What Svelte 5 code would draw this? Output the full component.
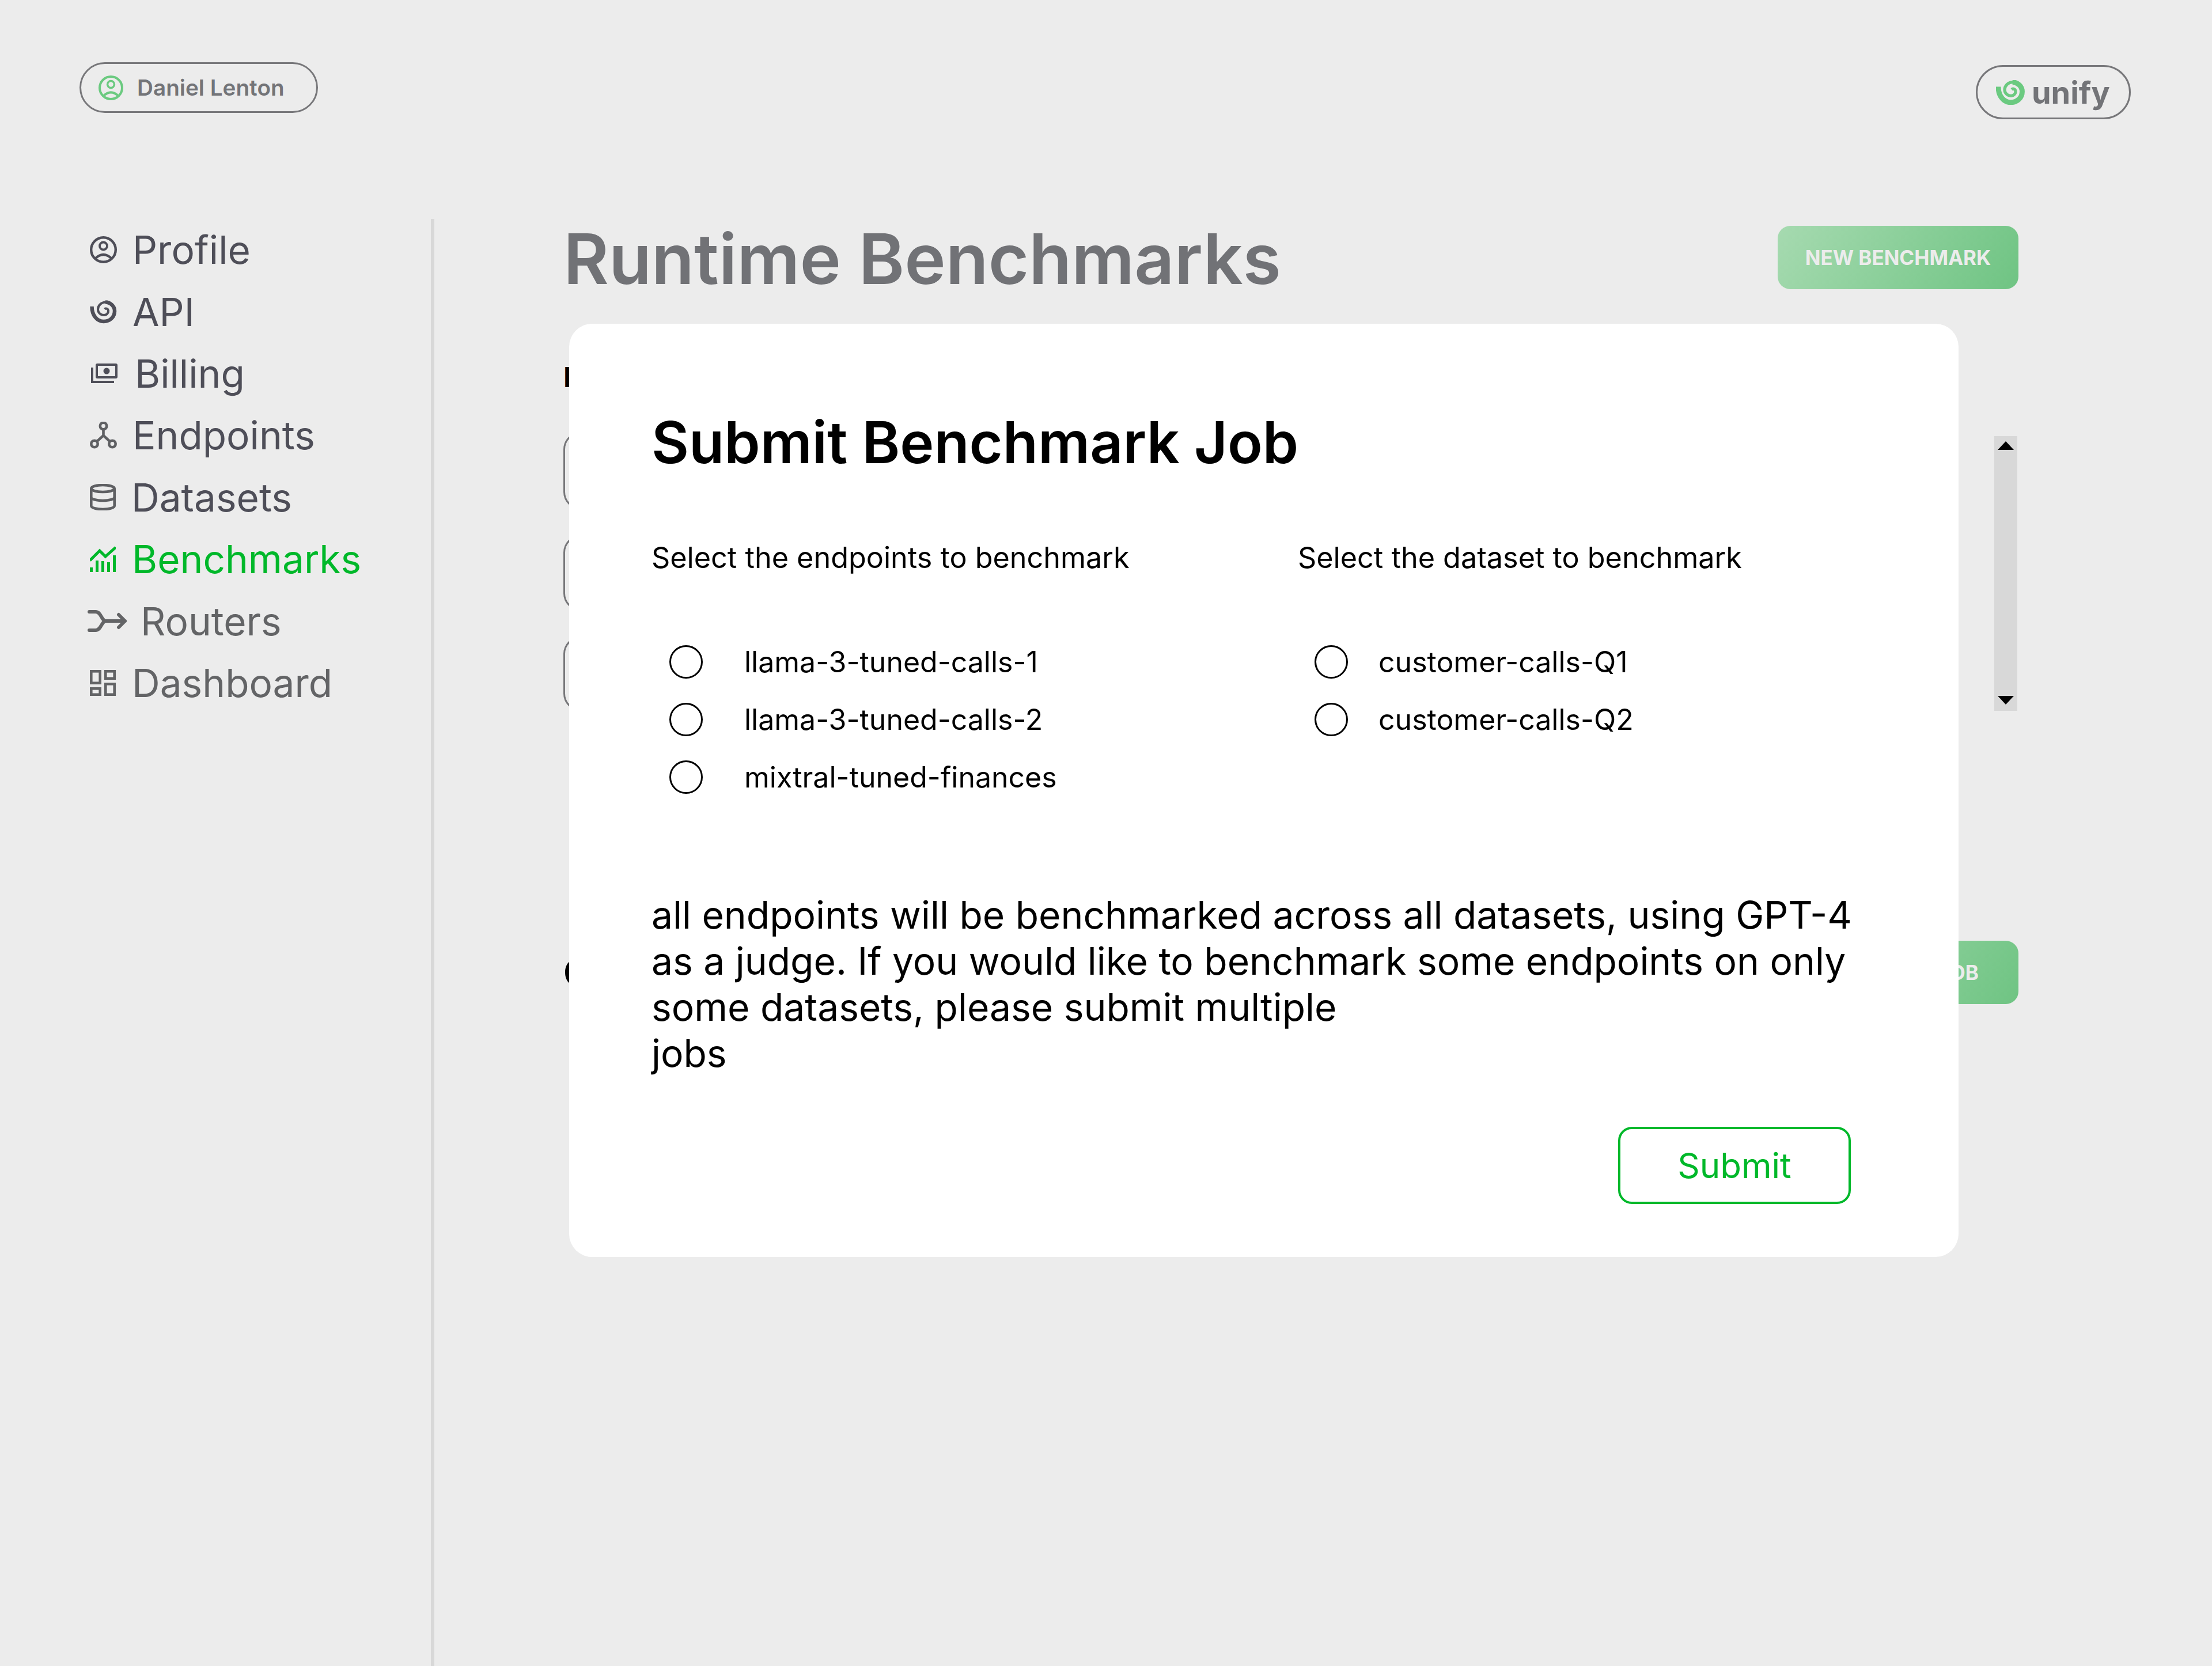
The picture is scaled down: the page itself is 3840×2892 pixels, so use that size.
<script>
  const nav = [
    { label: 'Profile', icon: 'profile' },
    { label: 'API', icon: 'api' },
    { label: 'Billing', icon: 'billing' },
    { label: 'Endpoints', icon: 'endpoints' },
    { label: 'Datasets', icon: 'datasets' },
    { label: 'Benchmarks', icon: 'benchmarks', active: true },
    { label: 'Routers', icon: 'routers', soft: true },
    { label: 'Dashboard', icon: 'dashboard', soft: true }
  ];
  const endpoints = ['llama-3-tuned-calls-1', 'llama-3-tuned-calls-2', 'mixtral-tuned-finances'];
  const datasets = ['customer-calls-Q1', 'customer-calls-Q2'];
</script>

{#snippet spiral(w, h, outer, inner)}
  <svg width={w} height={h} viewBox="0 0 47 41" fill="none" stroke="currentColor">
    <path stroke-width={outer} d="M3.5 11 C3.5 27 13 37 24 37 C35 37 43 29 43 19 C43 10 35 3.5 27 3.5" />
    <path stroke-width={inner} d="M28 3.5 C19 3.5 14 10 14 16 C14 22 19 26 24.5 26 C29.5 26 32.5 22 32 18 C31.5 15 28 13.5 25.5 15.5" />
  </svg>
{/snippet}

{#snippet profile(size)}
  <svg width={size} height={size} viewBox="0 0 47 47" fill="none" stroke="currentColor" stroke-width="4.4">
    <circle cx="23.5" cy="23.5" r="21.3" />
    <circle cx="23.5" cy="17" r="6.5" stroke-width="3.8" />
    <path d="M9 39 Q23.5 25 38 39" />
  </svg>
{/snippet}

{#snippet icon(name)}
  {#if name === 'profile'}
    {@render profile(47)}
  {:else if name === 'api'}
    {@render spiral(47, 41, 6.5, 4)}
  {:else if name === 'billing'}
    <svg width="46" height="34" viewBox="0 0 46 34" fill="none" stroke="currentColor" stroke-width="4">
      <rect x="10" y="2" width="34" height="22" rx="1" />
      <circle cx="27" cy="13" r="5.5" fill="currentColor" stroke="none" />
      <path d="M2 7 V32 H40" />
    </svg>
  {:else if name === 'endpoints'}
    <svg width="47" height="47" viewBox="0 0 47 47" fill="none" stroke="#5f6063" stroke-width="4.6">
      <circle cx="23.5" cy="7.5" r="5.7" />
      <circle cx="8" cy="38.5" r="5.7" />
      <circle cx="39" cy="38.5" r="5.7" />
      <path d="M23.5 13 V24 L12 34.5 M23.5 24 L35 34.5" />
    </svg>
  {:else if name === 'datasets'}
    <svg width="45" height="46" viewBox="0 0 45 46" fill="none" stroke="#5f6063" stroke-width="4.6">
      <ellipse cx="22.5" cy="8" rx="20.2" ry="6" />
      <path d="M2.3 8 V38 C2.3 41.5 11 44 22.5 44 C34 44 42.7 41.5 42.7 38 V8 M2.3 23 C2.3 26.5 11 29 22.5 29 C34 29 42.7 26.5 42.7 23" />
    </svg>
  {:else if name === 'benchmarks'}
    <svg width="45" height="45" viewBox="0 0 45 45" fill="currentColor">
      <path d="M0 25 L17 8 L27 18 L45 2" fill="none" stroke="currentColor" stroke-width="5" />
      <rect x="0" y="37" width="5" height="8" />
      <rect x="10" y="25" width="5" height="20" />
      <rect x="20" y="26" width="5" height="19" />
      <rect x="30" y="28" width="5" height="17" />
      <rect x="40" y="16" width="5" height="29" />
    </svg>
  {:else if name === 'routers'}
    <svg width="68" height="40" viewBox="0 0 68 40" fill="none" stroke="currentColor" stroke-width="6" stroke-linecap="round" stroke-linejoin="round">
      <path d="M3 4 H14 C24 4 24 20 32 20 H65 M3 36 H14 C24 36 24 20 32 20 M54 9 L65 20 L54 31" />
    </svg>
  {:else}
    <svg width="45" height="45" viewBox="0 0 45 45" fill="none" stroke="currentColor" stroke-width="4.6">
      <rect x="2.3" y="2.3" width="15.4" height="20.4" />
      <rect x="27.3" y="2.3" width="15.4" height="12.4" />
      <rect x="2.3" y="32.3" width="15.4" height="10.4" />
      <rect x="27.3" y="24.3" width="15.4" height="18.4" />
    </svg>
  {/if}
{/snippet}

<div class="page">
  <header class="top">
    <div class="pill user">
      <span class="user-icon">{@render profile(43)}</span>
      <span>Daniel Lenton</span>
    </div>
    <div class="pill brand">
      <span class="brand-icon">{@render spiral(50, 43, 8.5, 5)}</span>
      <span>unify</span>
    </div>
  </header>

  <div class="body">
    <nav class="side">
      {#each nav as item}
        <a class="item {item.icon}" class:active={item.active} class:soft={item.soft} href="#top">
          {@render icon(item.icon)}
          <span>{item.label}</span>
        </a>
      {/each}
    </nav>

    <main class="main">
      <div class="head">
        <h1>Runtime Benchmarks</h1>
        <button class="cta">NEW BENCHMARK</button>
      </div>
      <div class="label">Inputs</div>
      <div class="list">
        <div class="fields">
          <div class="field one"></div>
          <div class="field two"></div>
          <div class="field three"></div>
        </div>
        <div class="scroll"><i class="up"></i><i class="down"></i></div>
      </div>
      <div class="foot">
        <span class="foot-label">Cost</span>
        <button class="cta job">SUBMIT JOB</button>
      </div>
    </main>
  </div>

  <section class="modal">
    <h2>Submit Benchmark Job</h2>
    <div class="cols">
      <div class="col">
        <p class="col-title">Select the endpoints to benchmark</p>
        {#each endpoints as e}
          <label class="radio"><i class="dot"></i><span>{e}</span></label>
        {/each}
      </div>
      <div class="col second">
        <p class="col-title">Select the dataset to benchmark</p>
        {#each datasets as d}
          <label class="radio"><i class="dot"></i><span>{d}</span></label>
        {/each}
      </div>
    </div>
    <p class="note">all endpoints will be benchmarked across all datasets, using GPT-4 as a judge. If you would like to benchmark some endpoints on only some datasets, please submit multiple<br />jobs</p>
    <div class="actions"><button class="submit">Submit</button></div>
  </section>
</div>

<style>
  :global(body) { margin: 0; background: #ececec; }
  .page {
    position: relative;
    width: 3840px;
    height: 2892px;
    overflow: hidden;
    background: #ececec;
    font-family: Inter, "Liberation Sans", sans-serif;
  }
  .top {
    display: flex;
    justify-content: space-between;
    align-items: flex-start;
    height: 380px;
    padding: 108px 141px 0 138px;
    box-sizing: border-box;
  }
  .pill {
    display: flex;
    align-items: center;
    box-sizing: border-box;
    border: 3px solid #77777a;
    border-radius: 60px;
    color: #737478;
  }
  .user {
    width: 414px;
    height: 88px;
    padding-left: 30px;
    gap: 24px;
    font-size: 38.7px;
    font-weight: 600;
  }
  .user-icon { display: flex; color: #6bca80; }
  .brand {
    width: 269px;
    height: 94px;
    margin-top: 5px;
    padding-left: 32px;
    gap: 12px;
    font-size: 54px;
    font-weight: 700;
  }
  .brand-icon { display: flex; color: #6bca80; }
  .body { display: flex; height: 2512px; }
  .side {
    width: 754px;
    flex: none;
    box-sizing: border-box;
    border-right: 6px solid #d8d8d8;
    padding-left: 152px;
  }
  .item {
    display: flex;
    align-items: center;
    height: 107.4px;
    gap: 27px;
    padding-left: 4px;
    font-size: 67.5px;
    color: #4e4e58;
    text-decoration: none;
  }
  .item.billing { padding-left: 6px; gap: 30px; }
  .item.benchmarks { gap: 28px; }
  .item.routers { padding-left: 0; gap: 24px; }
  .item.dashboard { gap: 28px; }
  .active { color: #00b82a; }
  .soft { color: #636466; }
  .main {
    flex: 1;
    padding: 12px 336px 0 224px;
    min-width: 0;
  }
  .head {
    display: flex;
    justify-content: space-between;
    align-items: center;
    height: 110px;
  }
  h1 {
    margin: 0;
    padding-top: 4px;
    font-size: 121px;
    font-weight: 600;
    color: #717276;
    line-height: 110px;
    white-space: nowrap;
  }
  .cta {
    height: 110px;
    width: 418px;
    border: 0;
    border-radius: 22px;
    background: linear-gradient(120deg, #a6dab0, #6fc483);
    color: #ececec;
    font: 700 35px Inter, "Liberation Sans", sans-serif;
    text-align: center;
    padding: 0;
  }
  .label {
    margin-top: 124px;
    font-size: 48px;
    font-weight: 700;
    line-height: 58px;
    color: #000;
    height: 134px;
  }
  .list {
    display: flex;
    justify-content: space-between;
    margin-top: -3px;
  }
  .fields { width: 2300px; }
  .field {
    box-sizing: border-box;
    border: 3px solid #77777a;
    border-radius: 30px;
  }
  .one { height: 134px; margin-top: -7px; }
  .two { height: 131px; margin-top: 45px; }
  .three { height: 129px; margin-top: 45px; }
  .scroll {
    width: 40px;
    height: 477px;
    margin-right: 2px;
    box-sizing: border-box;
    padding: 9px 6px 11px;
    background: #d8d8d8;
    display: flex;
    flex-direction: column;
    justify-content: space-between;
  }
  .up, .down { width: 0; height: 0; border-left: 14px solid transparent; border-right: 14px solid transparent; }
  .up { border-bottom: 15px solid #000; }
  .down { border-top: 15px solid #000; }
  .foot {
    display: flex;
    justify-content: space-between;
    align-items: center;
    margin-top: 399px;
    height: 110px;
  }
  .foot-label { font-size: 60px; font-weight: 600; color: #000; }
  .job { width: 420px; text-align: right; padding-right: 69px; }
  .modal {
    position: absolute;
    left: 988px;
    top: 562px;
    width: 2412px;
    height: 1620px;
    box-sizing: border-box;
    padding: 142px 187px 0 143px;
    background: #fff;
    border-radius: 40px;
    color: #000;
  }
  h2 {
    margin: 0;
    font-size: 100px;
    font-weight: 600;
    line-height: 128px;
  }
  .cols { display: flex; margin-top: 103px; }
  .col { width: 1122px; flex: none; }
  .col-title { margin: 0 0 98px; font-size: 50.3px; line-height: 66px; }
  .radio {
    display: flex;
    align-items: center;
    height: 100px;
    padding-left: 31px;
    gap: 72px;
    font-size: 50px;
  }
  .second .radio { padding-left: 29px; gap: 53px; }
  .dot {
    width: 58px;
    height: 58px;
    box-sizing: border-box;
    border: 3px solid #000;
    border-radius: 50%;
    flex: none;
  }
  .note {
    position: absolute;
    left: 143px;
    top: 986px;
    width: 2090px;
    margin: 0;
    font-size: 65.9px;
    line-height: 80px;
  }
  .actions {
    position: absolute;
    right: 187px;
    top: 1394px;
  }
  .submit {
    width: 404px;
    height: 134px;
    background: #fff;
    border: 4px solid #00b82a;
    border-radius: 24px;
    color: #00b82a;
    font: 400 60px Inter, "Liberation Sans", sans-serif;
    padding: 0;
  }
</style>
